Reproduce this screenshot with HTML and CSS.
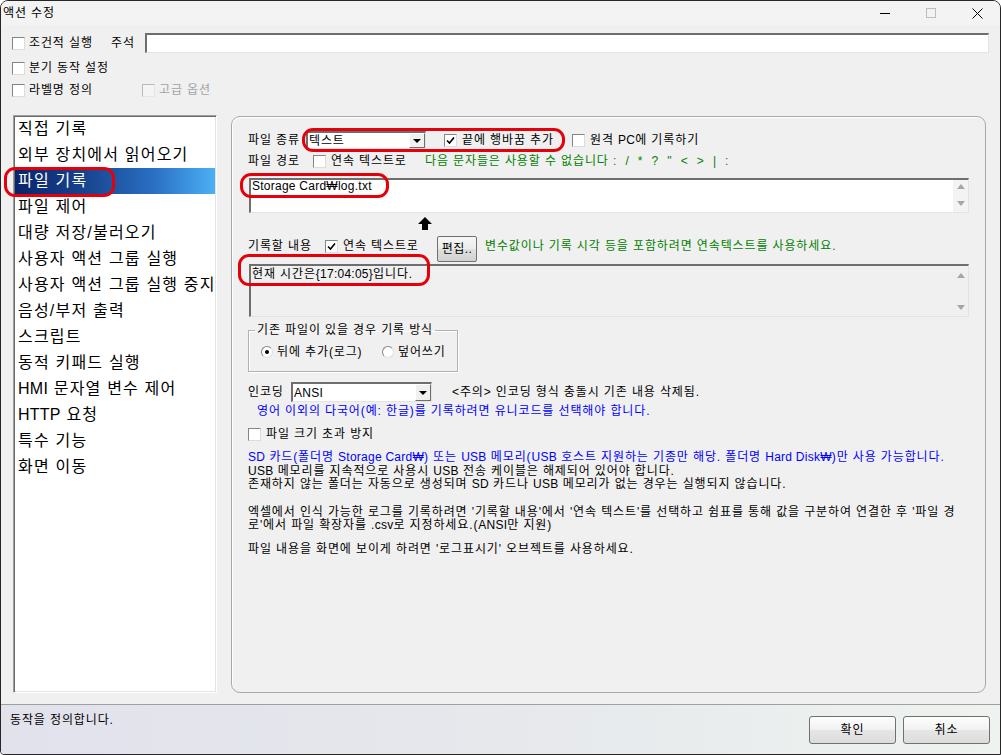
FILE: index.html
```html
<!DOCTYPE HTML>
<html>
  <head>
    <meta charset="utf-8">
    <link rel="stylesheet" href="styles.css">
  </head>
  <body>
    <div class="window">

      <div class="titlebar">
        <span class="title">액션 수정</span>
        <div class="caption">
          <span class="cap-btn"><svg width="10" height="10" viewBox="0 0 10 10"><line x1="0" y1="5.5" x2="10" y2="5.5" stroke="#000" stroke-width="1"/></svg></span>
          <span class="cap-btn"><svg width="10" height="10" viewBox="0 0 10 10"><rect x="0.5" y="0.5" width="9" height="9" fill="none" stroke="#bdbdbd" stroke-width="1"/></svg></span>
          <span class="cap-btn"><svg width="11" height="11" viewBox="0 0 11 11"><path d="M0.5 0.5 L10.5 10.5 M10.5 0.5 L0.5 10.5" stroke="#000" stroke-width="1"/></svg></span>
        </div>
      </div>

      <div class="options">
        <div class="opt-row r1">
          <label class="chk w99"><span class="box"></span>조건적 실행</label>
          <span class="memo-label">주석</span>
          <span class="field memo"></span>
        </div>
        <div class="opt-row r2">
          <label class="chk"><span class="box"></span>분기 동작 설정</label>
        </div>
        <div class="opt-row r3">
          <label class="chk w130"><span class="box"></span>라벨명 정의</label>
          <label class="chk disabled"><span class="box"></span>고급 옵션</label>
        </div>
      </div>

      <div class="main">
        <ul class="actions">
          <li>직접 기록</li>
          <li>외부 장치에서 읽어오기</li>
          <li class="selected">파일 기록</li>
          <li>파일 제어</li>
          <li>대량 저장/불러오기</li>
          <li>사용자 액션 그룹 실행</li>
          <li>사용자 액션 그룹 실행 중지</li>
          <li>음성/부저 출력</li>
          <li>스크립트</li>
          <li>동적 키패드 실행</li>
          <li><span class="en">HMI</span> 문자열 변수 제어</li>
          <li><span class="en">HTTP</span> 요청</li>
          <li>특수 기능</li>
          <li>화면 이동</li>
        </ul>

        <div class="panel">
          <div class="row row-a">
            <span class="lbl w58">파일 종류</span>
            <span class="select sel-type"><span class="sel-text">텍스트</span><span class="sel-btn"></span></span>
            <label class="chk w128"><span class="box"><svg width="9" height="9" viewBox="0 0 9 9"><path d="M1 4.5 L3.5 7 L8 1.5" fill="none" stroke="#000" stroke-width="1.6"/></svg></span>끝에 행바꿈 추가</label>
            <label class="chk"><span class="box"></span><span>원격 <span class="en">PC</span>에 기록하기</span></label>
          </div>

          <div class="row row-b">
            <span class="lbl w65">파일 경로</span>
            <label class="chk w112"><span class="box"></span>연속 텍스트로</label>
            <span class="green">다음 문자들은 사용할 수 없습니다 <span class="syms">: / * ? " &lt; &gt; | :</span></span>
          </div>

          <div class="memo-box path-box">
            <span class="memo-text"><span class="en">Storage Card₩log.txt</span></span>
            <span class="scroll"><span class="up"></span><span class="down"></span></span>
          </div>

          <div class="arrow-row">
            <svg class="arrow" width="14" height="13" viewBox="0 0 14 13"><path d="M7 0 L14 7 L10 7 L10 13 L4 13 L4 7 L0 7 Z" fill="#000"/></svg>
          </div>

          <div class="row row-c">
            <span class="lbl w77">기록할 내용</span>
            <label class="chk w112"><span class="box"><svg width="9" height="9" viewBox="0 0 9 9"><path d="M1 4.5 L3.5 7 L8 1.5" fill="none" stroke="#000" stroke-width="1.6"/></svg></span>연속 텍스트로</label>
            <span class="btn edit">편집..</span>
            <span class="lbl green">변수값이나 기록 시각 등을 포함하려면 연속텍스트를 사용하세요.</span>
          </div>

          <div class="memo-box content-box">
            <span class="memo-text">현재 시간은<span class="en">{17:04:05}</span>입니다.</span>
            <span class="scroll"><span class="up"></span><span class="down"></span></span>
          </div>

          <fieldset class="mode">
            <legend>기존 파일이 있을 경우 기록 방식</legend>
            <div class="radio-row">
              <label class="rad w121"><span class="radio on"></span>뒤에 추가(로그)</label>
              <label class="rad"><span class="radio"></span>덮어쓰기</label>
            </div>
          </fieldset>

          <div class="row row-enc">
            <span class="lbl w43">인코딩</span>
            <span class="select sel-enc"><span class="sel-text en">ANSI</span><span class="sel-btn"></span></span>
            <span class="lbl">&lt;주의&gt; 인코딩 형식 충돌시 기존 내용 삭제됨.</span>
          </div>
          <div class="enc-note blue">영어 이외의 다국어(예: 한글)를 기록하려면 유니코드를 선택해야 합니다.</div>

          <div class="row row-size">
            <label class="chk"><span class="box"></span>파일 크기 초과 방지</label>
          </div>

          <div class="info">
            <p><span class="blue"><span class="en">SD</span> 카드(폴더명 <span class="en">Storage Card₩</span>) 또는 <span class="en">USB</span> 메모리(<span class="en">USB</span> 호스트 지원하는 기종만 해당. 폴더명 <span class="en">Hard Disk₩</span>)만 사용 가능합니다.</span><br>
            <span class="en">USB</span> 메모리를 지속적으로 사용시 <span class="en">USB</span> 전송 케이블은 해제되어 있어야 합니다.<br>
            존재하지 않는 폴더는 자동으로 생성되며 <span class="en">SD</span> 카드나 <span class="en">USB</span> 메모리가 없는 경우는 실행되지 않습니다.</p>
            <p class="p2">엑셀에서 인식 가능한 로그를 기록하려면 '기록할 내용'에서 '연속 텍스트'를 선택하고 쉼표를 통해 값을 구분하여 연결한 후 '파일 경<br>
            로'에서 파일 확장자를 <span class="en">.csv</span>로 지정하세요.(<span class="en">ANSI</span>만 지원)</p>
            <p class="p3">파일 내용을 화면에 보이게 하려면 '로그표시기' 오브젝트를 사용하세요.</p>
          </div>
        </div>
      </div>

      <div class="statusbar">
        <span class="status-text">동작을 정의합니다.</span>
        <div class="buttons">
          <span class="btn dlg">확인</span>
          <span class="btn dlg">취소</span>
        </div>
      </div>

      <!-- red annotation marks -->
      <div class="mark mark-list"></div>
      <div class="mark mark-type"></div>
      <div class="mark mark-path"></div>
      <div class="mark mark-content"></div>
    </div>
  </body>
</html>
```

FILE: styles.css
```css
* {
  box-sizing: border-box;
}
html, body {
  margin: 0;
}
body {
  font-family: "Liberation Sans", "Noto Sans CJK KR", sans-serif;
  font-size: 12px;
  letter-spacing: 0.88px;
  color: #000;
  background: #fff;
}
/* latin runs are already close to the reference width */
.en {
  letter-spacing: 0.25px;
}

.window {
  position: relative;
  width: 1001px;
  height: 755px;
  border: 1px solid #262626;
  border-radius: 8px 8px 0 4px;
  background: #f0f0f0;
  overflow: hidden;
  display: flex;
  flex-direction: column;
}

/* title bar */
.titlebar {
  height: 24px;
  flex: none;
  background: #f3f3f3;
  display: flex;
  align-items: center;
  padding-left: 2px;
}
.title {
  flex: 1;
  line-height: 14px;
}
.caption {
  display: flex;
  height: 24px;
}
.cap-btn {
  width: 46px;
  height: 24px;
  display: flex;
  align-items: center;
  justify-content: center;
}

/* top options */
.options {
  padding-left: 11px;
  flex: none;
}
.opt-row {
  display: flex;
  align-items: center;
  height: 20px;
}
.r1 { margin-top: 8px; }
.r2 { margin-top: 5px; }
.r3 { margin-top: 2px; }

.chk, .rad {
  display: flex;
  align-items: center;
  white-space: nowrap;
  line-height: 14px;
  flex: none;
}
.box {
  width: 13px;
  height: 13px;
  flex: none;
  border: 1px solid;
  border-color: #858585 #dcdcdc #dcdcdc #858585;
  background: #fff;
  margin-right: 5px;
  display: flex;
  align-items: center;
  justify-content: center;
}
.options .box {
  margin-right: 4px;
}
.chk.disabled {
  color: #a3a3a3;
}
.chk.disabled .box {
  background: #f4f4f4;
  border-color: #b9b9b9 #e6e6e6 #e6e6e6 #b9b9b9;
}

.w43 { width: 43px; }
.w58 { width: 58px; }
.w65 { width: 65px; }
.w77 { width: 77px; }
.w99 { width: 99px; }
.w112 { width: 112px; }
.w121 { width: 121px; }
.w128 { width: 128px; }
.w130 { width: 130px; }

.memo-label {
  width: 34px;
  line-height: 14px;
}
.field, .select, .memo-box {
  border-style: solid;
  border-width: 2px 1px 1px 2px;
  border-color: #6e6e6e #e3e3e3 #e3e3e3 #6e6e6e;
}
.field {
  background: #fff;
}
.memo {
  width: 844px;
  height: 20px;
}

/* main area */
.main {
  display: flex;
  flex: none;
  margin-top: 15px;
  padding-left: 12px;
  height: 578px;
}
.actions {
  list-style: none;
  margin: 0;
  padding: 0 1px;
  width: 204px;
  height: 578px;
  flex: none;
  background: #fff;
  border: 1px solid;
  border-color: #a0a0a0 #fff #fff #a0a0a0;
  box-shadow: inset 1px 1px 0 #696969, inset -1px -1px 0 #e3e3e3;
  font-size: 16px;
  letter-spacing: 1.2px;
}
.actions li {
  height: 26px;
  line-height: 26px;
  padding-left: 3px;
  white-space: nowrap;
}
.actions li.selected {
  color: #fff;
  background: linear-gradient(to right, #0a246a 0%, #18448e 35%, #2a70c4 70%, #4cb0f4 100%);
}

.panel {
  margin-left: 14px;
  margin-top: 1px;
  width: 755px;
  height: 577px;
  flex: none;
  border: 1px solid #a8a8a8;
  border-radius: 9px;
  box-shadow: inset 1px 1px 0 #fff;
  padding: 13px 0 0 16px;
}

.row {
  display: flex;
  align-items: center;
  white-space: nowrap;
}
.lbl {
  flex: none;
  line-height: 14px;
}
.green {
  color: #008000;
  line-height: 14px;
}
.blue {
  color: #0000ff;
}
.syms {
  word-spacing: 4px;
}

.row-a { height: 20px; }
.row-b { height: 18px; margin-top: 2px; }

.select {
  display: flex;
  flex: none;
  background: #fff;
}
.sel-type {
  width: 120px;
  height: 18px;
  margin-right: 18px;
}
.sel-enc {
  width: 141px;
  height: 20px;
  margin-right: 20px;
}
.sel-text {
  flex: 1;
  align-self: center;
  padding-left: 1px;
  line-height: 14px;
}
.sel-btn {
  width: 16px;
  background: #f0f0f0;
  border: 1px solid;
  border-color: #fff #6e6e6e #6e6e6e #fff;
  display: flex;
  align-items: center;
  justify-content: center;
}
.sel-btn::after {
  content: "";
  border-left: 4px solid transparent;
  border-right: 4px solid transparent;
  border-top: 4px solid #000;
}

/* text boxes */
.memo-box {
  display: flex;
  margin-left: 1px;
  width: 720px;
  background: #fff;
}
.path-box {
  margin-top: 8px;
  height: 35px;
}
.content-box {
  margin-top: 2px;
  height: 53px;
  background: #f0f0f0;
}
.memo-text {
  flex: 1;
  padding: 0 0 0 1px;
  line-height: 13px;
}
.content-box .memo-text {
  padding-top: 2px;
}
.scroll {
  width: 15px;
  background: #f3f3f3;
  display: flex;
  flex-direction: column;
  justify-content: space-between;
  align-items: center;
  padding: 4px 0 6px;
}
.content-box .scroll {
  background: #f0f0f0;
  padding: 7px 0 6px;
}
.up {
  border-left: 4px solid transparent;
  border-right: 4px solid transparent;
  border-bottom: 5px solid #a6a6a6;
}
.down {
  border-left: 4px solid transparent;
  border-right: 4px solid transparent;
  border-top: 5px solid #a6a6a6;
}

.arrow-row {
  height: 19px;
}
.arrow {
  display: block;
  margin: 4px 0 0 170px;
}

.row-c {
  height: 26px;
  align-items: flex-start;
}
.row-c .lbl, .row-c .chk {
  margin-top: 3px;
}

.btn {
  display: flex;
  align-items: center;
  justify-content: center;
  border: 1px solid #707070;
  border-radius: 3px;
  background: linear-gradient(#f6f6f6, #ececec 50%, #dfdfdf 51%, #d2d2d2);
  flex: none;
  line-height: 14px;
}
.btn.edit {
  width: 40px;
  height: 26px;
  margin-right: 8px;
  border-radius: 2px;
  letter-spacing: 0.5px;
}

/* group box */
.mode {
  margin: 6px 0 0 0;
  width: 210px;
  min-width: 0;
  padding: 0 6px 12px 6px;
  border: 1px solid #b2b2b2;
  box-shadow: 1px 1px 0 #fff, inset 1px 1px 0 #fff;
}
.mode legend {
  padding: 0 2px;
  line-height: 14px;
}
.radio-row {
  display: flex;
  margin: 8px 0 0 6px;
  height: 14px;
}
.radio {
  width: 12px;
  height: 12px;
  flex: none;
  border-radius: 50%;
  border: 1px solid;
  border-color: #858585 #e0e0e0 #e0e0e0 #858585;
  background: #fff;
  margin-right: 4px;
  display: flex;
  align-items: center;
  justify-content: center;
}
.radio.on::after {
  content: "";
  width: 4px;
  height: 4px;
  border-radius: 50%;
  background: #000;
}

.row-enc {
  height: 20px;
  margin-top: 10px;
}
.enc-note {
  margin: 2px 0 0 9px;
  line-height: 14px;
  white-space: nowrap;
}
.row-size {
  height: 14px;
  margin-top: 9px;
}

.info {
  margin-top: 10px;
  white-space: nowrap;
}
.info p {
  margin: 0;
  line-height: 13.5px;
}
.info .p2 { margin-top: 14px; }
.info .p3 { margin-top: 10.5px; }

/* status bar */
.statusbar {
  margin-top: 11px;
  height: 50px;
  flex: none;
  border-top: 1px solid #a0a0a0;
  background: linear-gradient(to right, #e1e2ec, #e6e8ec 50%, #eef3ef);
  display: flex;
  padding: 8px 10px 0 9px;
}
.status-text {
  line-height: 14px;
}
.buttons {
  margin-left: auto;
  margin-top: 3px;
  display: flex;
  gap: 7px;
}
.btn.dlg {
  width: 87px;
  height: 28px;
  background: linear-gradient(#fdfdfd, #f1f1f1 50%, #e6e6e6 51%, #dcdcdc);
}

/* red annotation marks */
.mark {
  position: absolute;
  border: 3px solid #e5000a;
  border-radius: 11px;
}
.mark-list { left: 3px; top: 166px; width: 111px; height: 30px; }
.mark-type { left: 301px; top: 127px; width: 263px; height: 24px; }
.mark-path { left: 239px; top: 172px; width: 149px; height: 25px; }
.mark-content { left: 237px; top: 253px; width: 192px; height: 32px; }
```
